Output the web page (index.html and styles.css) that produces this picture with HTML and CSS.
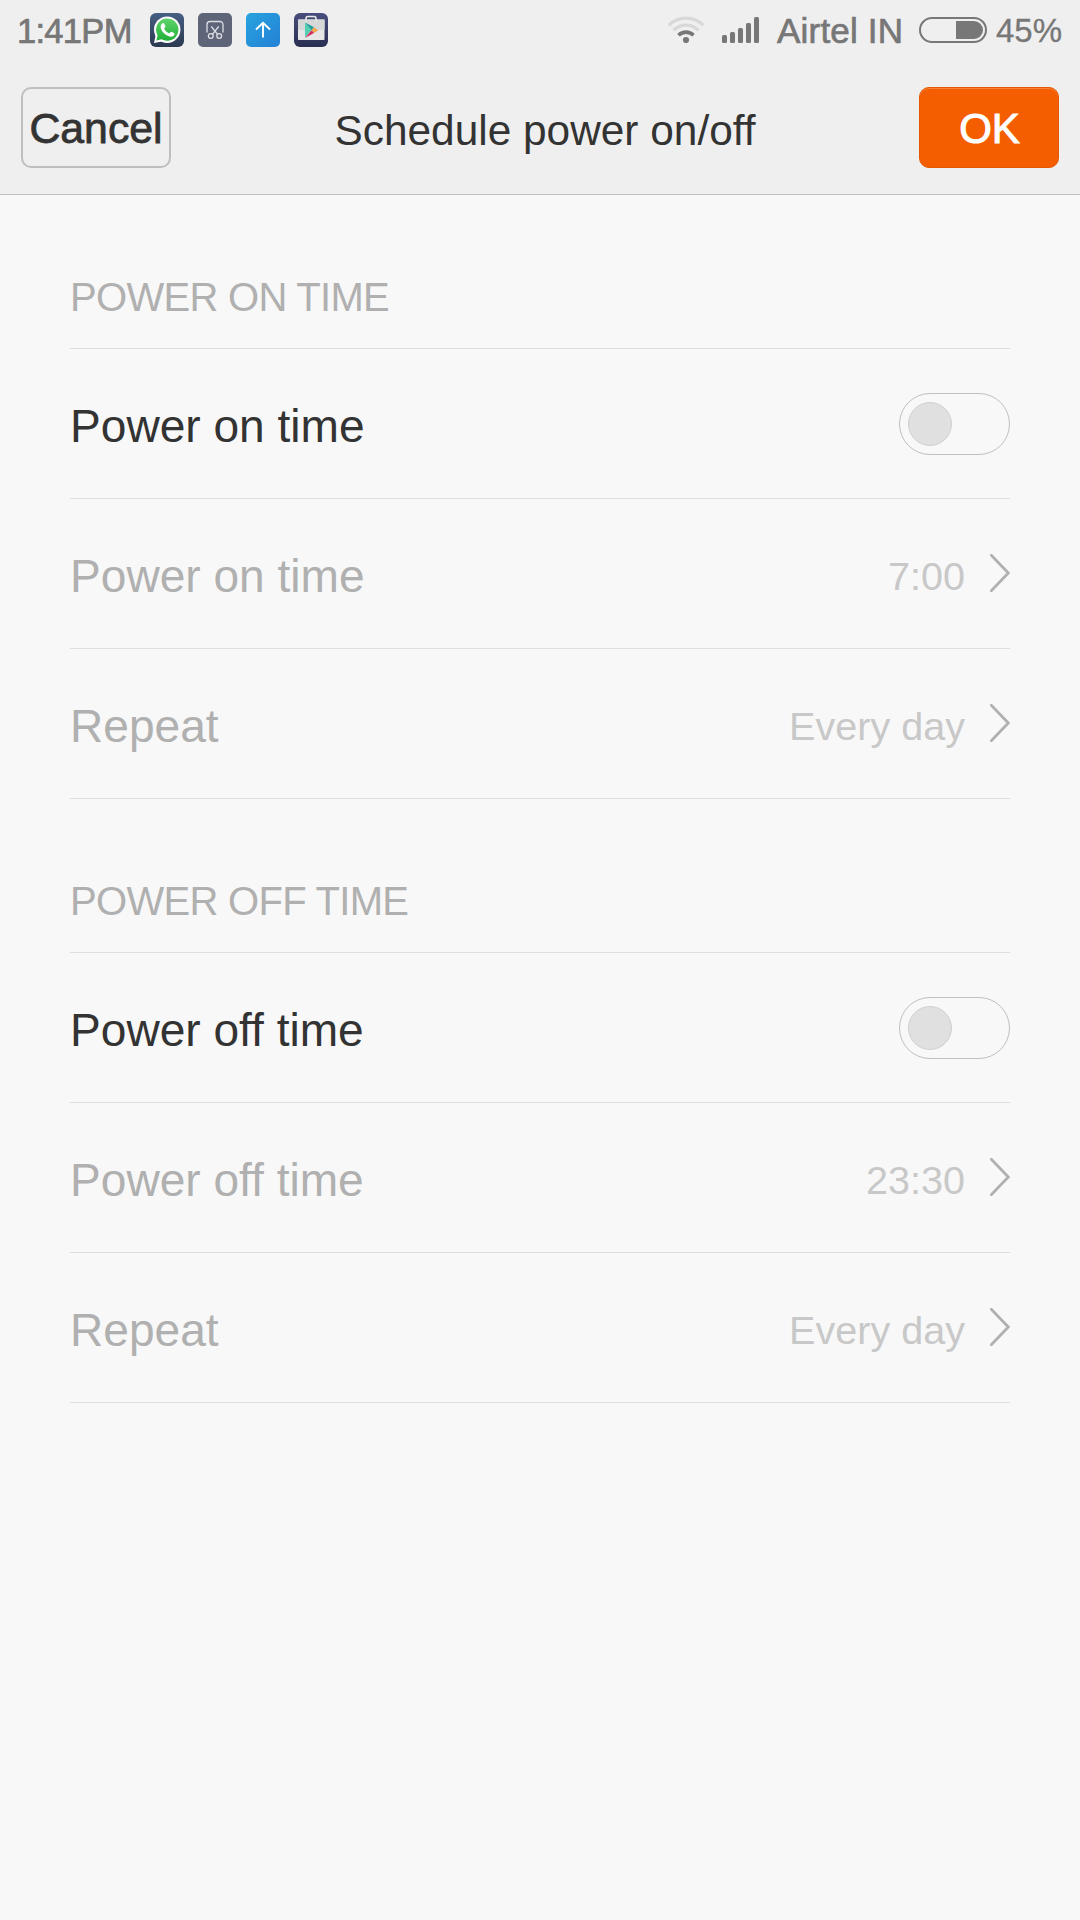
FILE: index.html
```
<!DOCTYPE html>
<html lang="en">
<head>
    <meta charset="UTF-8">
    <title>Schedule power on/off</title>
    <link rel="stylesheet" href="styles.css">
</head>
<body>
    <header class="header">
        <div class="status-bar">
            <span class="clock">1:41PM</span>
            <div class="notifications">
                <svg class="app-icon" viewBox="0 0 34 34">
                    <defs>
                        <linearGradient id="navy" x1="0" y1="0" x2="0" y2="1">
                            <stop offset="0" stop-color="#465f83"/>
                            <stop offset="1" stop-color="#2b3850"/>
                        </linearGradient>
                        <linearGradient id="green" x1="0" y1="0" x2="0" y2="1">
                            <stop offset="0" stop-color="#5fd46a"/>
                            <stop offset="1" stop-color="#20b038"/>
                        </linearGradient>
                    </defs>
                    <rect width="34" height="34" rx="6" fill="url(#navy)"/>
                    <path d="M4 30 L5.7 22 L12 28.6 Z" fill="#fff"/>
                    <circle cx="17.2" cy="16.7" r="13.2" fill="#fff"/>
                    <path d="M6.4 27.6 L7.6 22.3 A11.2 11.2 0 1 1 11.6 26.3 Z" fill="url(#green)"/>
                    <path d="M12.5 10.3 c.8-.4 1.6-.2 1.9.5 l1 2.4 c.3.8-1.4 2-1.2 2.5 1 2.1 2.7 3.6 4.9 4.5 .6.2 1.7-1.7 2.4-1.4 l2.6 1.3 c.6.3.5 1.3.1 2 -.8 1.4-2.8 2-4.6 1.4 -4.3-1.3-7.2-4.2-8.5-7.5 -.9-2.3-.3-4.9 1.4-5.7z" fill="#fff"/>
                </svg>
                <svg class="app-icon" viewBox="0 0 34 34">
                    <rect width="34" height="34" rx="5" fill="#5e6579"/>
                    <g fill="none" stroke="#dddfe4" stroke-width="1.3">
                        <path d="M9 19.5 V11.5 a3 3 0 0 1 3-3 H22 a3 3 0 0 1 3 3 V19.5"/>
                        <path d="M13.3 13.5 L19.6 21.3 M20.7 13.5 L14.4 21.3"/>
                        <circle cx="12.8" cy="23" r="2.4"/>
                        <circle cx="21.2" cy="23" r="2.4"/>
                    </g>
                </svg>
                <svg class="app-icon" viewBox="0 0 34 34">
                    <defs>
                        <linearGradient id="sky" x1="0" y1="0" x2="1" y2="1">
                            <stop offset="0" stop-color="#27a4de"/>
                            <stop offset="1" stop-color="#2480d6"/>
                        </linearGradient>
                    </defs>
                    <rect width="34" height="34" rx="5" fill="url(#sky)"/>
                    <path d="M17 24.5 V10 M10 16.5 L17 9.7 L24 16.5" fill="none" stroke="#fff" stroke-width="1.9"/>
                </svg>
                <svg class="app-icon" viewBox="0 0 34 34">
                    <defs>
                        <linearGradient id="indigo" x1="0" y1="0" x2="0" y2="1">
                            <stop offset="0" stop-color="#484d7d"/>
                            <stop offset="1" stop-color="#292f51"/>
                        </linearGradient>
                    </defs>
                    <rect width="34" height="34" rx="6" fill="url(#indigo)"/>
                    <rect x="4" y="6.5" width="26.5" height="20.5" rx=".8" fill="#e6e6e6"/>
                    <rect x="4" y="6.5" width="26.5" height="10.5" fill="#d6d7d7"/>
                    <path d="M12 8.5 V5.5 a2 2 0 0 1 2-2 H20 a2 2 0 0 1 2 2 V8.5" fill="none" stroke="#ececec" stroke-width="1.5"/>
                    <path d="M11 9.5 V24.5 L17.5 17.3 Z" fill="#55cfb4"/>
                    <path d="M11 9.5 L20 14.3 L17.5 17.3 Z" fill="#1f9d9d"/>
                    <path d="M20 14.3 L24.3 17.3 L20 20 L17.5 17.3 Z" fill="#f3a54c"/>
                    <path d="M11 25 L17.5 17.3 L20 20 Z" fill="#d52c63"/>
                </svg>
            </div>
            <div class="status-right">
                <svg class="wifi" viewBox="0 0 36 27" fill="none">
                    <path d="M.8 9.3 A24 24 0 0 1 35.2 9.3" stroke="#d8d8d8" stroke-width="3.2"/>
                    <path d="M5.5 14.3 A17.5 17.5 0 0 1 30.5 14.3" stroke="#d8d8d8" stroke-width="3.2"/>
                    <path d="M10.5 19.2 A10.7 10.7 0 0 1 25.5 19.2" stroke="#777" stroke-width="3.6"/>
                    <circle cx="18" cy="24" r="3.1" fill="#777"/>
                </svg>
                <svg class="signal" viewBox="0 0 37 26" fill="#777">
                    <rect x="0" y="18" width="5" height="8" rx="1.5"/>
                    <rect x="8" y="15" width="5" height="11" rx="1.5"/>
                    <rect x="16" y="11" width="5" height="15" rx="1.5"/>
                    <rect x="24" y="6" width="5" height="20" rx="1.5"/>
                    <rect x="32" y="0" width="5" height="26" rx="1.5"/>
                </svg>
                <span class="carrier">Airtel IN</span>
                <div class="battery"><div class="battery-level"></div></div>
                <span class="percent">45%</span>
            </div>
        </div>
        <div class="title-bar">
            <button class="btn cancel">Cancel</button>
            <h1 class="title">Schedule power on/off</h1>
            <button class="btn ok">OK</button>
        </div>
    </header>

    <main class="settings">
        <section>
            <h2 class="section-title">POWER ON TIME</h2>
            <div class="row">
                <span class="label">Power on time</span>
                <div class="toggle"><div class="knob"></div></div>
            </div>
            <div class="row disabled">
                <span class="label">Power on time</span>
                <span class="value">7:00</span>
                <svg class="chevron" viewBox="0 0 20 38"><path d="M1.3 1.3 L18.3 19 L1.3 36.7"/></svg>
            </div>
            <div class="row disabled">
                <span class="label">Repeat</span>
                <span class="value">Every day</span>
                <svg class="chevron" viewBox="0 0 20 38"><path d="M1.3 1.3 L18.3 19 L1.3 36.7"/></svg>
            </div>
        </section>
        <section>
            <h2 class="section-title">POWER OFF TIME</h2>
            <div class="row">
                <span class="label">Power off time</span>
                <div class="toggle"><div class="knob"></div></div>
            </div>
            <div class="row disabled">
                <span class="label">Power off time</span>
                <span class="value">23:30</span>
                <svg class="chevron" viewBox="0 0 20 38"><path d="M1.3 1.3 L18.3 19 L1.3 36.7"/></svg>
            </div>
            <div class="row disabled">
                <span class="label">Repeat</span>
                <span class="value">Every day</span>
                <svg class="chevron" viewBox="0 0 20 38"><path d="M1.3 1.3 L18.3 19 L1.3 36.7"/></svg>
            </div>
        </section>
    </main>
</body>
</html>
```
FILE: styles.css
```
* {
    margin: 0;
    padding: 0;
    box-sizing: border-box;
}

body {
    min-height: 100vh;
    background-color: #f8f8f8;
    font-family: "Liberation Sans", Arial, sans-serif;
    color: #333;
}

svg {
    display: block;
    flex-shrink: 0;
}

.header {
    height: 195px;
    background-color: #efefef;
    border-bottom: 1px solid #bfbfbf;
}

/* Status bar */
.status-bar {
    height: 60px;
    padding: 0 17px 0 17px;
    display: flex;
    align-items: center;
    color: #777;
    font-size: 35px;
    -webkit-text-stroke: 0.7px #777;
}

.clock {
    width: 133px;
    padding-top: 2px;
    font-size: 34.5px;
    letter-spacing: -0.7px;
}

.notifications {
    display: flex;
    gap: 14px;
}

.app-icon {
    width: 34px;
    height: 34px;
}

.status-right {
    margin-left: auto;
    display: flex;
    align-items: center;
}

.wifi {
    width: 36px;
    height: 27px;
    margin: 0 18px 2px 0;
}

.signal {
    width: 37px;
    height: 26px;
    margin-right: 18px;
}

.carrier {
    width: 142px;
    padding-top: 2px;
    letter-spacing: 0.2px;
}

.battery {
    width: 68px;
    height: 26px;
    padding: 2px;
    border: 2px solid #777;
    border-radius: 13px;
    display: flex;
    justify-content: flex-end;
}

.battery-level {
    width: 27px;
    height: 18px;
    background-color: #777;
    border-radius: 0 9px 9px 0;
}

.percent {
    width: 67px;
    margin-left: 9px;
    padding-top: 2px;
    font-size: 33px;
    -webkit-text-stroke: 0.3px #777;
}

/* Title bar */
.title-bar {
    padding: 27px 21px 0;
    display: flex;
    justify-content: space-between;
    align-items: flex-start;
}

.btn {
    height: 81px;
    padding-top: 2px;
    border-radius: 10px;
    font-family: inherit;
    font-size: 42.8px;
}

.cancel {
    width: 150px;
    border: 2px solid #bfbfbf;
    background-color: transparent;
    color: #333;
    -webkit-text-stroke: 0.8px #333;
}

.ok {
    width: 140px;
    padding-left: 1px;
    border: 1px solid #e55800;
    background-color: #f45e00;
    color: #fff;
    font-size: 42px;
    box-shadow: inset 0 1px 0 #f88136;
    -webkit-text-stroke: 1px #fff;
}

.title {
    font-size: 42.4px;
    font-weight: normal;
    line-height: 88px;
}

/* Settings list */
.settings {
    padding: 0 70px;
}

.section-title {
    height: 154px;
    padding-top: 49px;
    border-bottom: 1px solid #dedede;
    color: #b0b0b0;
    font-size: 40px;
    font-weight: normal;
    line-height: 106px;
    letter-spacing: -0.7px;
}

.row {
    height: 150px;
    border-bottom: 1px solid #dedede;
    display: flex;
    align-items: center;
}

.label {
    flex: 1;
    font-size: 46.1px;
    line-height: 52px;
    padding-top: 4px;
}

.disabled .label {
    color: #b0b0b0;
}

.value {
    margin-right: 25px;
    padding-top: 6px;
    color: #c8c8c8;
    font-size: 39.6px;
}

.chevron {
    width: 20px;
    height: 38px;
    margin-bottom: 2px;
    fill: none;
    stroke: #b0b0b0;
    stroke-width: 2.7;
    stroke-linecap: round;
}

.toggle {
    width: 111px;
    height: 62px;
    padding: 8px;
    border: 1px solid #bfbfbf;
    border-radius: 31px;
}

.knob {
    width: 44px;
    height: 44px;
    background-color: #e0e0e0;
    border: 1px solid #d0d0d0;
    border-radius: 50%;
}
```
